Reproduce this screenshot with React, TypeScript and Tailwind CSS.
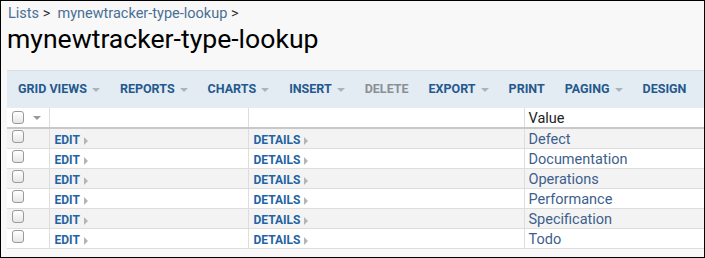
import React from "react";

const tools = [
  { label: "GRID VIEWS", menu: true },
  { label: "REPORTS", menu: true },
  { label: "CHARTS", menu: true },
  { label: "INSERT", menu: true },
  { label: "DELETE", disabled: true },
  { label: "EXPORT", menu: true },
  { label: "PRINT" },
  { label: "PAGING", menu: true },
  { label: "DESIGN" },
];

const values = ["Defect", "Documentation", "Operations", "Performance", "Specification", "Todo"];

const Caret = () => (
  <span className="ml-[5px] inline-block h-0 w-0 border-x-[4px] border-t-[4px] border-x-transparent border-t-[#a9b4bf] align-middle" />
);

const Arrow = () => (
  <span className="ml-[4px] inline-block h-0 w-0 border-y-[4px] border-l-[4px] border-y-transparent border-l-[#b5b5b5] align-middle" />
);

const Check = () => (
  <span className="block h-[13px] w-[12px] rounded-[3px] border border-[#9a9a9a] bg-gradient-to-b from-white to-[#e6e6e6]" />
);

export default function App() {
  return (
    <div className="h-[258px] w-[705px] overflow-hidden border border-black bg-[#f8f8f8] font-['Roboto',sans-serif]">
      <div className="pl-[7px] pt-[4px] text-[14.5px] leading-[18px] text-[#4a6f95]">
        Lists <span className="text-[#333]">&gt;</span>&nbsp; mynewtracker-type-lookup{" "}
        <span className="text-[#333]">&gt;</span>
      </div>
      <h1 className="pl-[6px] text-[26.6px] leading-[32px] text-black">mynewtracker-type-lookup</h1>

      <div className="ml-[6px] mt-[15px] w-[720px]">
        <div className="flex h-[38px] items-center border-t border-[#d6dde4] bg-[#e4ecf3] pl-[11px] text-[12.5px] font-bold">
          {tools.map((t) => (
            <span
              key={t.label}
              className={`mr-[20px] flex items-center ${t.disabled ? "text-[#8a8f94]" : "text-[#24598e]"}`}
            >
              {t.label}
              {t.menu && <Caret />}
            </span>
          ))}
        </div>

        <table className="w-[720px] table-fixed border-collapse text-[14.5px] leading-[17px]">
          <colgroup>
            <col className="w-[42px]" />
            <col className="w-[199px]" />
            <col className="w-[276px]" />
            <col />
          </colgroup>
          <thead>
            <tr className="h-[20px] bg-white">
              <td className="border-b-2 border-r border-b-[#c8c8c8] border-r-[#ddd] p-0 pl-[5px] align-middle">
                <div className="flex items-center">
                  <Check />
                  <span className="ml-[9px] inline-block h-0 w-0 border-x-[4px] border-t-[4px] border-x-transparent border-t-[#999]" />
                </div>
              </td>
              <td className="border-b-2 border-r border-b-[#c8c8c8] border-r-[#ddd] p-0" />
              <td className="border-b-2 border-r border-b-[#c8c8c8] border-r-[#ddd] p-0" />
              <td className="border-b-2 border-b-[#c8c8c8] p-0 pl-[4px] pt-[2px] align-top text-[#222]">Value</td>
            </tr>
          </thead>
          <tbody>
            {values.map((v, i) => (
              <tr key={v} className={`h-[20px] ${i % 2 === 0 ? "bg-[#f3f3f3]" : "bg-white"}`}>
                <td className="border-b border-r border-[#ddd] p-0 pl-[5px] pt-[1px] align-top">
                  <Check />
                </td>
                <td className="border-b border-r border-[#ddd] p-0 pl-[5px] pt-[3px] align-top text-[12px] leading-[16px] font-bold text-[#1f64a3]">
                  EDIT
                  <Arrow />
                </td>
                <td className="border-b border-r border-[#ddd] p-0 pl-[5px] pt-[3px] align-top text-[12px] leading-[16px] font-bold text-[#1f64a3]">
                  DETAILS
                  <Arrow />
                </td>
                <td className="border-b border-[#ddd] p-0 pl-[4px] pt-[2px] align-top text-[#3d5f8c]">{v}</td>
              </tr>
            ))}
          </tbody>
        </table>
      </div>
    </div>
  );
}
